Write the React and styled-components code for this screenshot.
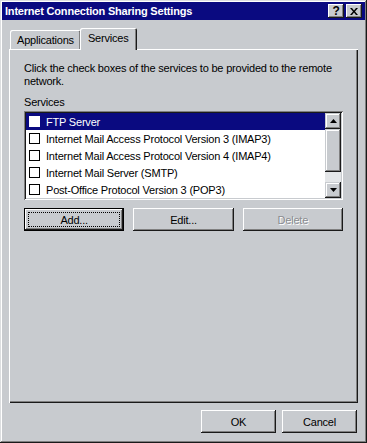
import styled, { createGlobalStyle } from 'styled-components';

const GlobalStyle = createGlobalStyle`
  body {
    margin: 0;
    background: #c8cbcf;
  }
`;

const gray = '#c8cbcf';
const navy = '#0a0a80';

const services = [
  'FTP Server',
  'Internet Mail Access Protocol Version 3 (IMAP3)',
  'Internet Mail Access Protocol Version 4 (IMAP4)',
  'Internet Mail Server (SMTP)',
  'Post-Office Protocol Version 3 (POP3)',
];

function App() {
  return (
    <>
      <GlobalStyle />
      <Window>
        <TitleBar>
          <Title>Internet Connection Sharing Settings</Title>
          <CaptionButton>?</CaptionButton>
          <CaptionButton $close>
            <svg width="8" height="7" viewBox="0 0 8 7">
              <path d="M0 0h2l2 2.5L6 0h2L5 3.5 8 7H6L4 4.5 2 7H0l3-3.5z" fill="#000" />
            </svg>
          </CaptionButton>
        </TitleBar>

        <Body>
          <TabStrip>
            <Tab>Applications</Tab>
            <Tab $active>Services</Tab>
          </TabStrip>

          <Panel>
            <Intro>
              Click the check boxes of the services to be provided to the remote
              network.
            </Intro>
            <FieldLabel>Services</FieldLabel>

            <ListBox>
              <Rows>
                {services.map((name, i) => (
                  <Row key={name} $selected={i === 0}>
                    <CheckBox $selected={i === 0} />
                    <span>{name}</span>
                  </Row>
                ))}
              </Rows>
              <ScrollBar>
                <ArrowButton>
                  <svg width="7" height="4" viewBox="0 0 7 4">
                    <path d="M3.5 0L7 4H0z" fill="#000" />
                  </svg>
                </ArrowButton>
                <Thumb />
                <Track />
                <ArrowButton>
                  <svg width="7" height="4" viewBox="0 0 7 4">
                    <path d="M0 0h7L3.5 4z" fill="#000" />
                  </svg>
                </ArrowButton>
              </ScrollBar>
            </ListBox>

            <ButtonRow>
              <Button $default>
                <FocusRing>Add...</FocusRing>
              </Button>
              <Button>Edit...</Button>
              <Button disabled>Delete</Button>
            </ButtonRow>
          </Panel>

          <Footer>
            <Button $w={75}>OK</Button>
            <Button $w={75}>Cancel</Button>
          </Footer>
        </Body>
      </Window>
    </>
  );
}

export default App;

const Window = styled.div`
  width: 367px;
  height: 443px;
  box-sizing: border-box;
  padding: 2px;
  background: ${gray};
  display: flex;
  flex-direction: column;
  font-family: "Liberation Sans", Arial, sans-serif;
  font-size: 11px;
  letter-spacing: -0.2px;
  color: #000;
  box-shadow: inset -1px -1px #1a1a1a, inset 1px 1px #dcdee0,
    inset -2px -2px #808080, inset 2px 2px #fff;
`;

const TitleBar = styled.div`
  height: 18px;
  background: ${navy};
  display: flex;
  align-items: center;
  padding: 0 3px 0 3px;
`;

const Title = styled.div`
  flex: 1;
  color: #fff;
  font-weight: bold;
  font-size: 11px;
  letter-spacing: -0.2px;
  white-space: nowrap;
`;

const CaptionButton = styled.div`
  width: 16px;
  height: 14px;
  box-sizing: border-box;
  margin-left: ${(p) => (p.$close ? '2px' : '0')};
  background: ${gray};
  display: flex;
  align-items: center;
  justify-content: center;
  font-weight: bold;
  font-size: 12px;
  line-height: 1;
  box-shadow: inset -1px -1px #1a1a1a, inset 1px 1px #fff,
    inset -2px -2px #808080;
`;

const Body = styled.div`
  flex: 1;
  display: flex;
  flex-direction: column;
  padding: 7px 7px 8px 7px;
`;

const TabStrip = styled.div`
  height: 22px;
  display: flex;
  align-items: flex-end;
  padding-left: 1px;
`;

const Tab = styled.div`
  position: relative;
  z-index: ${(p) => (p.$active ? 1 : 0)};
  height: ${(p) => (p.$active ? '22px' : '19px')};
  margin-left: ${(p) => (p.$active ? '-1px' : '0')};
  margin-bottom: ${(p) => (p.$active ? '-1px' : '0')};
  padding: ${(p) => (p.$active ? '4px 8px 0 8px' : '4px 7px 0 7px')};
  box-sizing: border-box;
  background: ${gray};
  border-radius: 2px 2px 0 0;
  white-space: nowrap;
  box-shadow: inset 1px 1px #fff, inset -1px 0 #1a1a1a, inset -2px 0 #808080;
`;

const Panel = styled.div`
  height: 354px;
  box-sizing: border-box;
  padding: 13px 15px 0 15px;
  display: flex;
  flex-direction: column;
  box-shadow: inset 1px 1px #fff, inset -1px -1px #1a1a1a,
    inset -2px -2px #808080;
`;

const Intro = styled.div`
  line-height: 13px;
`;

const FieldLabel = styled.div`
  margin-top: 8px;
  line-height: 13px;
`;

const ListBox = styled.div`
  margin-top: 2px;
  height: 89px;
  box-sizing: border-box;
  padding: 2px;
  display: flex;
  background: #fff;
  box-shadow: inset 1px 1px #808080, inset -1px -1px #fff,
    inset 2px 2px #1a1a1a, inset -2px -2px ${gray};
`;

const Rows = styled.div`
  flex: 1;
  overflow: hidden;
`;

const Row = styled.div`
  height: 17px;
  display: flex;
  align-items: center;
  gap: 6px;
  padding-left: 3px;
  white-space: nowrap;
  background: ${(p) => (p.$selected ? navy : 'transparent')};
  color: ${(p) => (p.$selected ? '#fff' : '#000')};
`;

const CheckBox = styled.div`
  width: 11px;
  height: 11px;
  box-sizing: border-box;
  flex: none;
  background: #fff;
  border: 1px solid ${(p) => (p.$selected ? '#fff' : '#000')};
`;

const ScrollBar = styled.div`
  width: 16px;
  display: flex;
  flex-direction: column;
`;

const ArrowButton = styled.div`
  height: 16px;
  flex: none;
  background: ${gray};
  display: flex;
  align-items: center;
  justify-content: center;
  box-shadow: inset -1px -1px #1a1a1a, inset 1px 1px ${gray},
    inset -2px -2px #808080, inset 2px 2px #fff;
`;

const Thumb = styled.div`
  height: 43px;
  flex: none;
  background: ${gray};
  box-shadow: inset -1px -1px #1a1a1a, inset 1px 1px ${gray},
    inset -2px -2px #808080, inset 2px 2px #fff;
`;

const Track = styled.div`
  flex: 1;
  background: #e4e6e8;
`;

const ButtonRow = styled.div`
  margin-top: 8px;
  display: grid;
  grid-template-columns: repeat(3, 1fr);
  gap: 9px;
`;

const Button = styled.button`
  width: ${(p) => (p.$w ? `${p.$w}px` : 'auto')};
  height: 23px;
  padding: 0;
  border: ${(p) => (p.$default ? '1px solid #000' : 'none')};
  background: ${gray};
  font-family: inherit;
  font-size: 11px;
  letter-spacing: -0.2px;
  color: #000;
  display: flex;
  align-items: center;
  justify-content: center;
  box-shadow: inset -1px -1px #1a1a1a, inset 1px 1px #fff,
    inset -2px -2px #808080;

  &:disabled {
    color: #8a8c90;
    text-shadow: 1px 1px #fff;
  }
`;

const FocusRing = styled.span`
  flex: 1;
  align-self: stretch;
  margin: 3px;
  border: 1px dotted #000;
  display: flex;
  align-items: center;
  justify-content: center;
`;

const Footer = styled.div`
  display: flex;
  justify-content: flex-end;
  gap: 6px;
  padding: 7px 1px 0 0;
`;
